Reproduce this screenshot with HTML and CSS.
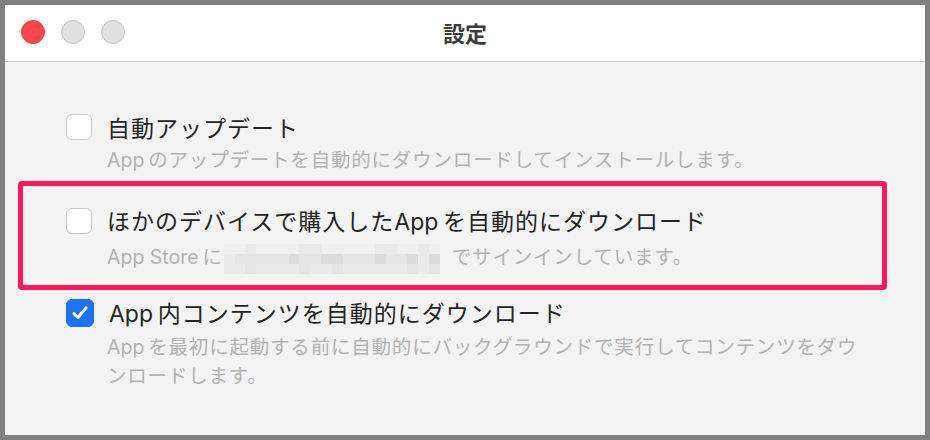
FILE: index.html
```html
<!DOCTYPE html>
<html lang="ja">
<head>
	<meta charset="UTF-8">
	<meta name="viewport" content="width=device-width, initial-scale=1.0">
	<title>設定</title>
	<link rel="stylesheet" href="styles.css">
</head>
<body>

<div class="window">
	<div class="titlebar">
		<div class="lights">
			<span class="light close"></span>
			<span class="light"></span>
			<span class="light"></span>
		</div>
		<div class="title">設定</div>
		<div></div>
	</div>

	<div class="options">
		<div class="option first">
			<div class="row">
				<span class="box"></span>
				<span class="label">自動アップデート</span>
			</div>
			<p class="sub sub1"><span class="lat">App</span>のアップデートを自動的にダウンロードしてインストールします。</p>
		</div>

		<div class="option marked">
			<div class="row">
				<span class="box"></span>
				<span class="label">ほかのデバイスで購入した<span class="lat">App</span>を自動的にダウンロード</span>
			</div>
			<p class="sub sub2"><span class="lat">App Store</span>に<span class="mosaic">
				<i class="a"></i><i class="a"></i><i class="d"></i><i class="a"></i><i class="a"></i><i class="a"></i><i class="a"></i><i class="d"></i><i class="d"></i><i class="a"></i><i class="a"></i><i class="a"></i><i class="a"></i><i class="a"></i><i class="d"></i><i class="d"></i><i class="a"></i><i class="a"></i><i class="d"></i><i class="a"></i>
				<i class="d"></i><i class="b"></i><i class="b"></i><i class="b"></i><i class="b"></i><i class="b"></i><i class="c"></i><i class="b"></i><i class="b"></i><i class="c"></i><i class="c"></i><i class="b"></i><i class="b"></i><i class="b"></i><i class="c"></i><i class="b"></i><i class="b"></i><i class="c"></i><i class="d"></i><i class="c"></i>
				<i class="d"></i><i class="d"></i><i class="b"></i><i class="d"></i><i class="d"></i><i class="d"></i><i class="d"></i><i class="b"></i><i class="d"></i><i class="d"></i><i class="b"></i><i class="d"></i><i class="d"></i><i class="d"></i><i class="d"></i><i class="d"></i><i class="d"></i><i class="b"></i><i class="d"></i><i class="b"></i>
			</span>でサインインしています。</p>
		</div>

		<div class="option last">
			<div class="row">
				<span class="box checked">
					<svg width="28" height="28" viewBox="0 0 28 28"><path d="M7.5 14.5 L11.8 18.8 L20.5 8.5" fill="none" stroke="#fff" stroke-width="3.2" stroke-linecap="round" stroke-linejoin="round"/></svg>
				</span>
				<span class="label"><span class="lat">App</span>内コンテンツを自動的にダウンロード</span>
			</div>
			<p class="sub sub3"><span class="lat">App</span>を最初に起動する前に自動的にバックグラウンドで実行してコンテンツをダウ<br>ンロードします。</p>
		</div>
	</div>
</div>

</body>
</html>
```

FILE: styles.css
```css
html, body {
	margin: 0;
	height: 440px;
	overflow: hidden;
	background-color: #808080;
	font-family: "Noto Sans CJK JP", "Noto Sans", sans-serif;
}
.window {
	margin: 5px;
	width: 920px;
	height: 430px;
	background-color: #f3f3f3;
}
.titlebar {
	height: 56px;
	background-color: #fff;
	border-bottom: 1px solid #cbcbcb;
	display: grid;
	grid-template-columns: 1fr auto 1fr;
	align-items: center;
}
.lights {
	display: flex;
	gap: 16px;
	padding-left: 16px;
	padding-bottom: 2px;
}
.light {
	width: 22px;
	height: 22px;
	border-radius: 50%;
	background-color: #e1e1e1;
	border: 1px solid #c2c2c2;
}
.light.close {
	background-color: #fe4648;
	border-color: #e2403f;
}
.title {
	font-size: 22px;
	font-weight: bold;
	color: #3b3b3b;
	padding-bottom: 2px;
}
.options {
	padding: 45px 38px 0 13px;
}
.option {
	border: 5px solid transparent;
	border-radius: 4px;
	padding-left: 43px;
}
.option.marked {
	border-color: #ff175c;
	margin-top: 2px;
	padding-top: 20px;
	padding-bottom: 13px;
}
.option.last {
	margin-top: 3px;
}
.row {
	display: flex;
	align-items: center;
	gap: 15px;
	height: 30px;
}
.box {
	width: 24px;
	height: 24px;
	border: 1px solid #c6c6c6;
	border-radius: 6px;
	background-color: #fff;
	display: flex;
	align-items: center;
	justify-content: center;
	flex-shrink: 0;
}
.box.checked {
	width: 26px;
	height: 26px;
	border: 1px solid #1b69ea;
	background-color: #1f72f5;
}
.label {
	font-size: 23px;
	letter-spacing: 1px;
	color: #242424;
	line-height: 30px;
	white-space: nowrap;
}
.lat {
	font-family: Inter, "Noto Sans", sans-serif;
	letter-spacing: 0;
	margin-right: 0.2em;
}
.sub {
	margin: 0;
	padding-left: 41px;
	font-size: 19.5px;
	letter-spacing: 0.8px;
	line-height: 28px;
	color: #b2b2b2;
	white-space: nowrap;
}
.sub1 {
	margin-top: 3px;
}
.sub2 {
	margin-top: 6px;
}
.sub3 {
	margin-top: 4px;
}
.mosaic {
	display: inline-grid;
	grid-template-columns: repeat(20, 1fr);
	grid-template-rows: repeat(3, 1fr);
	width: 216px;
	height: 30px;
	vertical-align: middle;
	margin: -2px 12px -2px 1px;
}
.mosaic i {
	display: block;
}
.mosaic .a { background-color: #f0f0f0; }
.mosaic .b { background-color: #e5e5e5; }
.mosaic .c { background-color: #dcdcdc; }
.mosaic .d { background-color: #eaeaea; }
```
